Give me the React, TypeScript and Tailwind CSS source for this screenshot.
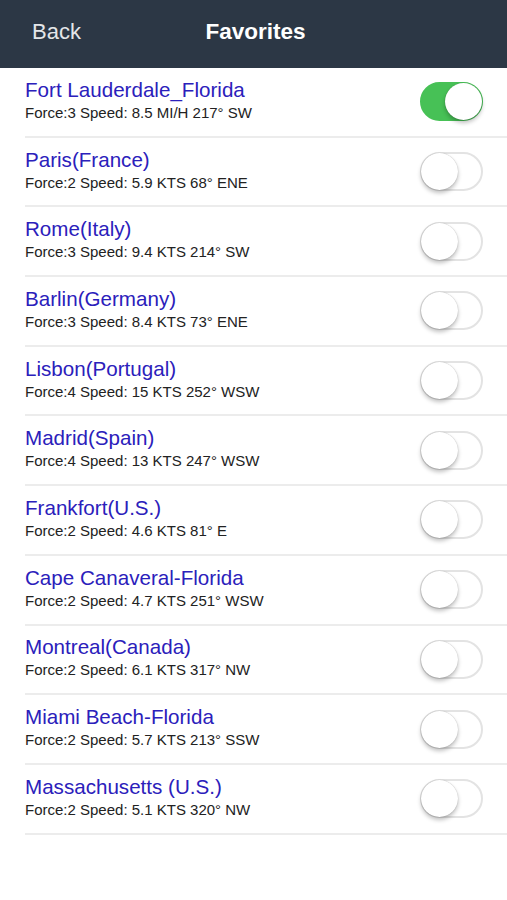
import { useState } from "react";

interface Spot {
  name: string;
  info: string;
  on: boolean;
}

const spots: Spot[] = [
  { name: "Fort Lauderdale_Florida", info: "Force:3 Speed: 8.5 MI/H 217° SW", on: true },
  { name: "Paris(France)", info: "Force:2 Speed: 5.9 KTS 68° ENE", on: false },
  { name: "Rome(Italy)", info: "Force:3 Speed: 9.4 KTS 214° SW", on: false },
  { name: "Barlin(Germany)", info: "Force:3 Speed: 8.4 KTS 73° ENE", on: false },
  { name: "Lisbon(Portugal)", info: "Force:4 Speed: 15 KTS 252° WSW", on: false },
  { name: "Madrid(Spain)", info: "Force:4 Speed: 13 KTS 247° WSW", on: false },
  { name: "Frankfort(U.S.)", info: "Force:2 Speed: 4.6 KTS 81° E", on: false },
  { name: "Cape Canaveral-Florida", info: "Force:2 Speed: 4.7 KTS 251° WSW", on: false },
  { name: "Montreal(Canada)", info: "Force:2 Speed: 6.1 KTS 317° NW", on: false },
  { name: "Miami Beach-Florida", info: "Force:2 Speed: 5.7 KTS 213° SSW", on: false },
  { name: "Massachusetts (U.S.)", info: "Force:2 Speed: 5.1 KTS 320° NW", on: false },
];

function Toggle({ on, onClick }: { on: boolean; onClick: () => void }) {
  return (
    <button
      onClick={onClick}
      className={`relative w-[63px] h-[39px] rounded-full border-2 transition-colors ${
        on ? "bg-[#47c156] border-[#47c156]" : "bg-white border-[#e3e3e3]"
      }`}
    >
      <span
        className={`absolute top-[-1px] w-[37px] h-[37px] rounded-full bg-white shadow-[0_3px_4px_rgba(0,0,0,0.25),0_0_1px_rgba(0,0,0,0.3)] ${
          on ? "left-[23px]" : "left-[-1px]"
        }`}
      />
    </button>
  );
}

export default function App() {
  const [states, setStates] = useState(spots.map((s) => s.on));

  return (
    <div className="w-[507px] h-[900px] bg-white font-['Liberation_Sans',Arial,sans-serif]">
      {/* Header */}
      <div className="h-[68px] bg-[#2c3745] flex items-center relative pb-[5px]">
        <span className="pl-8 text-[22px] text-[#e4e6e9]">Back</span>
        <span className="absolute left-0 right-0 text-center text-[22.5px] font-bold text-white pl-[4px]">
          Favorites
        </span>
      </div>

      {/* List */}
      <div className="pl-[25px]">
        {spots.map((s, i) => (
          <div
            key={s.name}
            className="h-[69.7px] flex items-center justify-between pr-[24px] border-b-2 border-[#ececec]"
          >
            <div className="flex flex-col pb-[4px]">
              <span className="text-[20.6px] leading-[24px] text-[#2b20bb]">{s.name}</span>
              <span className="text-[15px] leading-[18px] mt-[2px] text-[#222]">{s.info}</span>
            </div>
            <Toggle
              on={states[i]}
              onClick={() => setStates(states.map((v, j) => (j === i ? !v : v)))}
            />
          </div>
        ))}
      </div>
    </div>
  );
}
